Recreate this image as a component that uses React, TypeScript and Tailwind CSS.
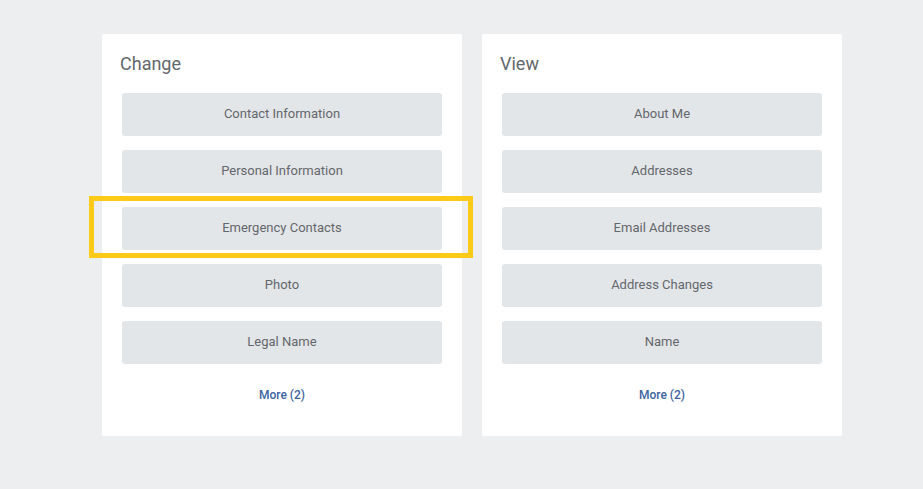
import React from "react";

const change = ["Contact Information", "Personal Information", "Emergency Contacts", "Photo", "Legal Name"];
const view = ["About Me", "Addresses", "Email Addresses", "Address Changes", "Name"];

function Card({ title, items, highlight }: { title: string; items: string[]; highlight?: string }) {
  return (
    <div className="w-[360px] h-[402px] bg-white rounded-[2px] pt-[18px] px-[18px] flex flex-col">
      <div className="text-[18px] leading-[24px] text-[#63676c]">{title}</div>
      <div className="mt-[17px] px-[2px] flex flex-col gap-[14px]">
        {items.map((it) => (
          <div key={it} className="relative">
            <div className="h-[43px] pb-[2px] rounded-[3px] bg-[#e3e6e9] flex items-center justify-center text-[13px] text-[#63676c]">
              {it}
            </div>
            {highlight === it && (
              <div className="absolute left-[-33px] right-[-31px] top-[-11px] bottom-[-8px] border-[5px] border-[#fcca17] pointer-events-none" />
            )}
          </div>
        ))}
      </div>
      <div className="mt-[23px] text-center text-[12px] leading-[16px] font-medium text-[#3d63a0]">More (2)</div>
    </div>
  );
}

export default function App() {
  return (
    <div
      className="w-[923px] h-[489px] bg-[#edeef0] pt-[34px] pl-[102px] flex gap-[20px] items-start"
      style={{ fontFamily: "Roboto, 'Liberation Sans', sans-serif" }}
    >
      <Card title="Change" items={change} highlight="Emergency Contacts" />
      <Card title="View" items={view} />
    </div>
  );
}
